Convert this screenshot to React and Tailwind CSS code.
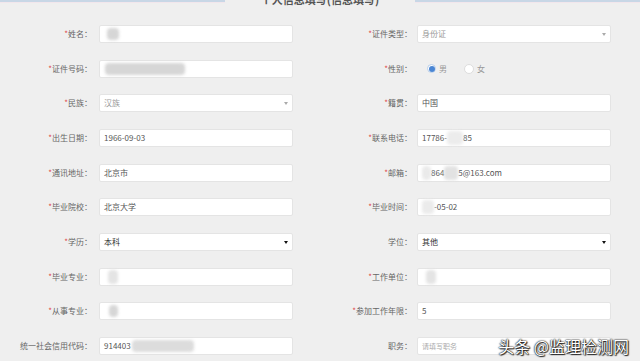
import React from "react";

const Blob = ({ w, h = 12, className = "" }) => (
  <span
    className={`inline-block rounded-[4px] bg-[#d6d6d6] blur-[1.5px] ${className}`}
    style={{ width: w, height: h }}
  />
);

const Label = ({ text, req = true }) => (
  <div className="w-[92px] shrink-0 text-right text-[8px] text-[#666] whitespace-nowrap">
    {req && <span className="text-[#e04848]">*</span>}
    {text}：
  </div>
);

const Box = ({ children, className = "" }) => (
  <div
    className={`relative flex h-[18px] w-[194px] shrink-0 items-center rounded-[2px] border border-[#e4e4e4] bg-white pl-[4px] text-[8px] text-[#555] ${className}`}
  >
    {children}
  </div>
);

const Select = ({ value, light }) => (
  <Box>
    <span className={light ? "text-[#999]" : "text-[#333]"}>{value}</span>
    <span
      className={`absolute right-[4px] top-[7px] h-0 w-0 border-x-[2px] border-t-[3px] border-x-transparent ${
        light ? "border-t-[#aaa]" : "border-t-[#111]"
      }`}
    />
  </Box>
);

const Radio = () => (
  <div className="flex h-[18px] items-center pl-[10px] text-[8px] text-[#999]">
    <span className="flex h-[9px] w-[9px] items-center justify-center rounded-full border border-[#b8cde8] bg-white">
      <span className="h-[6px] w-[6px] rounded-full bg-[#4a86d4]" />
    </span>
    <span className="ml-[3px]">男</span>
    <span className="ml-[17px] h-[10px] w-[10px] rounded-full border border-[#ddd] bg-white" />
    <span className="ml-[3px]">女</span>
  </div>
);

const rows = [
  [
    ["姓名", true, <Box><Blob w={12} className="ml-[3px]" /></Box>],
    ["证件类型", true, <Select value="身份证" light />],
  ],
  [
    ["证件号码", true, <Box><Blob w={80} className="ml-[1px]" /></Box>],
    ["性别", true, <Radio />],
  ],
  [
    ["民族", true, <Select value="汉族" light />],
    ["籍贯", true, <Box>中国</Box>],
  ],
  [
    ["出生日期", true, <Box>1966-09-03</Box>],
    ["联系电话", true, <Box>17786-<Blob w={16} h={14} className="bg-[#ececec]" />85</Box>],
  ],
  [
    ["通讯地址", true, <Box>北京市</Box>],
    ["邮箱", true, <Box><Blob w={9} h={14} className="bg-[#eaeaea]" />864<Blob w={14} h={14} className="bg-[#e2e2e2]" />5@163.com</Box>],
  ],
  [
    ["毕业院校", true, <Box>北京大学</Box>],
    ["毕业时间", true, <Box><Blob w={12} h={14} className="bg-[#ebebeb]" />-05-02</Box>],
  ],
  [
    ["学历", true, <Select value="本科" />],
    ["学位", false, <Select value="其他" />],
  ],
  [
    ["毕业专业", true, <Box><Blob w={10} h={14} className="ml-[4px] bg-[#e4e4e4]" /></Box>],
    ["工作单位", true, <Box><Blob w={10} h={14} className="ml-[4px] bg-[#e4e4e4]" /></Box>],
  ],
  [
    ["从事专业", true, <Box><Blob w={9} className="ml-[5px]" /></Box>],
    ["参加工作年限", true, <Box>5</Box>],
  ],
  [
    ["统一社会信用代码", false, <Box>914403<Blob w={62} className="ml-[1px] bg-[#dcdcdc]" /></Box>],
    ["职务", false, <Box><span className="text-[#aaa] text-[7px]">请填写职务</span></Box>],
  ],
];

export default function App() {
  return (
    <div
      className="relative h-[361px] w-[640px] overflow-hidden bg-[#efefef]"
      style={{ fontFamily: '"Noto Sans CJK SC", "Noto Sans", sans-serif' }}
    >
      <div className="flex h-[25px] items-start">
        <div className="w-[225px]">
          <div className="h-[2px] bg-[#c8d7e6]" />
          <div className="h-[1px] bg-[#f2e6ec]" />
        </div>
        <div className="flex flex-1 justify-center">
          <span className="-mt-[8px] text-[11px] font-bold leading-[14px] text-[#555]">
            个人信息填写(信息填写)
          </span>
        </div>
        <div className="w-[225px]">
          <div className="h-[2px] bg-[#c8d7e6]" />
          <div className="h-[1px] bg-[#f2e6ec]" />
        </div>
      </div>

      <div className="flex flex-col gap-[16.67px]">
        {rows.map((row, i) => (
          <div key={i} className="flex">
            <div className="flex w-[320px] items-center gap-[7px]">
              <Label text={row[0][0]} req={row[0][1]} />
              {row[0][2]}
            </div>
            <div className="flex w-[320px] items-center gap-[5px]">
              <Label text={row[1][0]} req={row[1][1]} />
              {row[1][2]}
            </div>
          </div>
        ))}
      </div>

      <div className="absolute bottom-[5px] right-[11px] text-[16px] leading-[20px] text-white [text-shadow:0_0_2px_#000,0_0_1px_#000,1px_1px_1px_#333]">
        头条 @监理检测网
      </div>
    </div>
  );
}
